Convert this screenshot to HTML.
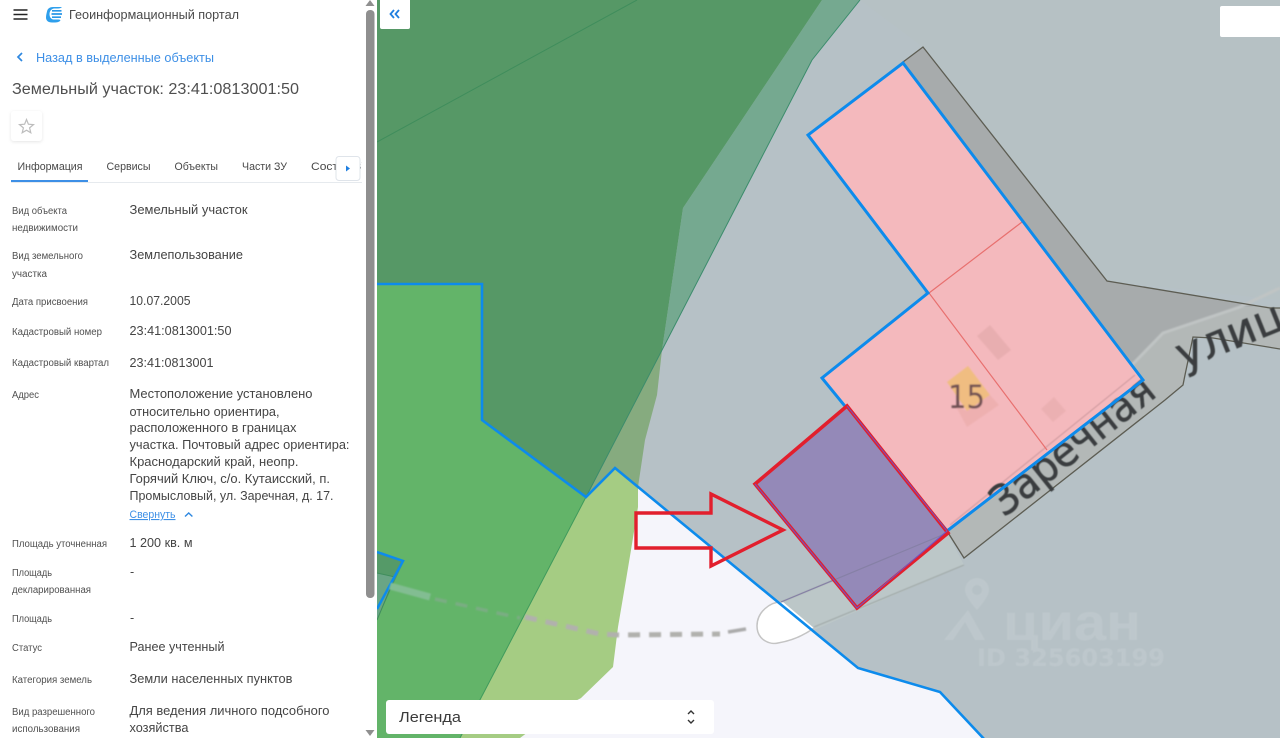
<!DOCTYPE html>
<html lang="ru"><head><meta charset="utf-8"><title>Геоинформационный портал</title>
<style>
html,body{margin:0;padding:0;width:1280px;height:738px;overflow:hidden;background:#fff}
svg{display:block;position:absolute;left:0;top:0}
text{font-family:"Liberation Sans",sans-serif;white-space:pre}
.l{font-size:10px;fill:#505050}
.v{font-size:12.5px;fill:#444}
.t{font-size:11px;fill:#484848}
</style></head><body>
<svg width="1280" height="738" viewBox="0 0 1280 738" xmlns="http://www.w3.org/2000/svg">
<defs>
<filter id="b1" x="-10%" y="-10%" width="120%" height="120%"><feGaussianBlur stdDeviation="0.8"/></filter>
<filter id="b2" x="-5%" y="-5%" width="110%" height="110%"><feGaussianBlur stdDeviation="0.3"/></filter>
<filter id="b3" x="-10%" y="-10%" width="120%" height="120%"><feGaussianBlur stdDeviation="0.5"/></filter>
<filter id="sh" x="-30%" y="-30%" width="160%" height="160%"><feDropShadow dx="0" dy="1" stdDeviation="1.5" flood-color="#000" flood-opacity=".1"/></filter>
<clipPath id="mapc"><rect x="377" y="0" width="903" height="738"/></clipPath>
<clipPath id="tabc"><rect x="0" y="150" width="362" height="30"/></clipPath>
</defs>

<g clip-path="url(#mapc)">
<rect x="377" y="0" width="903" height="738" fill="#b6c1c6"/>
<polygon points="860,0 1280,0 1280,300 1100,280 923,47" fill="#b6c1c4"/>
<!-- white area -->
<polygon points="638,487 858,668 940,692 982,738 500,738 581,698" fill="#f5f5fb"/>
<!-- pale green -->
<polygon points="586,497 615,468 638,487 638,507 631,550 626,580 618,627 613,667 581,698 555,712 520,738 460,738" fill="#a5cc83"/>
<!-- olive -->
<polygon points="662,350 586,497 615,468 638,487 645,440 657,395" fill="#86ab7f"/>
<!-- teal band -->
<polygon points="822,0 860,0 812,60 586,497 662,350 683,208" fill="#75a990"/>
<!-- dark green -->
<polygon points="377,0 822,0 683,208 662,350 586,497 482,420 482,284 377,284" fill="#569866"/>
<polyline points="377,142 637,0" fill="none" stroke="#3f8d5c" stroke-width="1"/>
<polyline points="860,0 812,60 586,497" fill="none" stroke="#3c8c6c" stroke-width="1"/>
<!-- bright green -->
<polygon points="377,284 482,284 482,420 586,497 460,738 377,738" fill="#63b469"/>
<polyline points="586,497 460,738" fill="none" stroke="#3f9a5c" stroke-width="1"/>
<!-- left small polygon -->
<polygon points="377,552 404,561 377,620" fill="#559a68"/>
<polyline points="377,573 395,577 377,620" fill="#6aa585" stroke="#3f8d5c" stroke-width="1"/>
<polyline points="377,552 403,561 377,609" fill="none" stroke="#0d8bec" stroke-width="2.5"/>
<!-- dashed path -->
<g filter="url(#b1)">
<polyline points="390,586 430,597" fill="none" stroke="#82bd92" stroke-width="7"/>
<polyline points="435,599 520,618" fill="none" stroke="#79ad82" stroke-width="3.5" stroke-dasharray="12 9"/>
<polyline points="525,617 600,634 620,635 720,634" fill="none" stroke="#b1b1ad" stroke-width="5" stroke-dasharray="12 9"/>
<polyline points="728,632 746,629" fill="none" stroke="#aaa" stroke-width="3.5"/>
</g>
<!-- street -->
<polygon points="781,602 947,532 964,565 814,630" fill="#bcc7c8" filter="url(#b2)"/>
<path d="M783,602 C770,602 757,612 757,626 C757,640 770,645 778,643 C790,641 803,636 814,628 Z" fill="#fff" filter="url(#b2)"/>
<path d="M781,602 C770,602 757,612 757,626 C757,640 770,645 778,643 C790,641 803,636 814,628" fill="none" stroke="#c4c4c4" stroke-width="1.5" filter="url(#b2)"/>
<g filter="url(#b3)">
<polyline points="781,602 947,533" fill="none" stroke="#a0a9a8" stroke-width="1.2"/>
<polyline points="814,627 964,565" fill="none" stroke="#a0a9a8" stroke-width="1.2"/>
</g>
<!-- road polygon -->
<polygon points="903,62 923,47 1107,281 1270,308 1280,308 1280,349 1213,338 1193,337 1185,375 1183,385 1165,400 964,558 947,531" fill="#a7abac"/>
<polygon points="1130,367 1163,333 1240,307 1265,306 1280,308 1280,349 1213,338 1193,337 1185,375 1183,385 1165,400 964,558 947,531" fill="#b3b8b7"/>
<polyline points="1130,367 1163,333 1240,307 1280,288" fill="none" stroke="#c0c4c4" stroke-width="3" filter="url(#b1)"/>
<polyline points="903,62 923,47 1107,281 1270,308 1280,308" fill="none" stroke="#5d5d53" stroke-width="1.3"/>
<polyline points="947,531 964,558 1165,400 1183,385 1185,375 1193,337 1213,338 1280,349" fill="none" stroke="#5d5d53" stroke-width="1.3"/>
<!-- pink parcel -->
<polygon points="903,63 808,135 928,293 822,378 947,531 1143,380" fill="#f4b9bd"/>
<polyline points="950,525 1135,375" fill="none" stroke="#d39ea3" stroke-width="1.2" filter="url(#b3)"/>
<g filter="url(#b1)">
<polygon points="947,382 968,366 990,395 967,411" fill="#f0bd81"/>
<polygon points="967,411 990,395 999,405 967,427 955,405" fill="#eeb0b0"/>
<polygon points="977,336 990,325 1011,350 998,360" fill="#e8aeb0"/>
<polygon points="1041,409 1054,397 1066,411 1053,422" fill="#ebb0b2"/>
<text x="948" y="408" font-size="32" fill="#6f4f53" style="font-family:'DejaVu Sans',sans-serif" textLength="37" lengthAdjust="spacingAndGlyphs">15</text>
</g>
<polyline points="1022,222 929,293 1047,450" fill="none" stroke="#e8706f" stroke-width="1.2"/>
<!-- road labels -->
<g filter="url(#b3)">
<text transform="translate(1004,518) rotate(-38.5)" font-size="42" fill="#3a3e3f" stroke="#3a3e3f" stroke-width=".5" textLength="197" lengthAdjust="spacingAndGlyphs" style="font-family:'DejaVu Sans',sans-serif">Заречная</text>
<text transform="translate(1183,370) rotate(-22)" font-size="44" fill="#3a3e3f" stroke="#3a3e3f" stroke-width=".5" style="font-family:'DejaVu Sans',sans-serif">улица</text>
</g>
<!-- blue lines -->
<polygon points="903,63 808,135 928,293 822,378 947,531 1143,380" fill="none" stroke="#0d8bec" stroke-width="3"/>
<polyline points="377,284 482,284 482,420 586,497 615,468 858,668 940,692 985,740" fill="none" stroke="#0d8bec" stroke-width="2.6"/>
<!-- purple -->
<polygon points="847,406 755,484 857,608 948,533" fill="#9489b8"/>
<polyline points="781,602 947,533" fill="none" stroke="#8680a6" stroke-width="1.2"/>
<polygon points="847,406 755,484 857,608 948,533" fill="none" stroke="#e21f2d" stroke-width="3.6"/>
<polyline points="847,406 947,531 857,608 755,484" fill="none" stroke="#6f55c6" stroke-width="1"/>
<!-- arrow -->
<polygon points="636,513 711,513 711,494 783,530 711,566 711,548 636,548" fill="none" stroke="#e21f2d" stroke-width="3.4"/>
<!-- watermark -->
<g fill="#fff" opacity=".1" filter="url(#b3)">
<path fill-rule="evenodd" d="M977,578 a12,12 0 0 1 12,12 c0,7 -12,20 -12,20 s-12,-13 -12,-20 a12,12 0 0 1 12,-12 z m0,7 a5,5 0 1 0 0,10 a5,5 0 0 0 0,-10 z"/>
<polygon points="968,610 985,640 975,640 965,622 953,640 944,640"/>
<text x="1003" y="640" font-size="52" font-weight="bold" textLength="138" lengthAdjust="spacingAndGlyphs">циан</text>
<text x="977" y="666" font-size="24" font-weight="bold" textLength="188" style="font-family:'DejaVu Sans',sans-serif">ID 325603199</text>
</g>
</g>

<!-- map controls -->
<rect x="380" y="-3" width="30" height="32" rx="2" fill="#fff"/>
<path d="M394,10 L390.500,14 L394,18 M399,10 L395.500,14 L399,18" fill="none" stroke="#1f7fe0" stroke-width="1.800"/>
<rect x="1220" y="6" width="62" height="31" rx="2" fill="#fff"/>
<rect x="386" y="700" width="328" height="34" rx="3" fill="#fff"/>
<text x="399" y="722" font-size="15" fill="#3a3a3a" textLength="62" lengthAdjust="spacingAndGlyphs" filter="url(#b2)">Легенда</text>
<path d="M688,714 L691,711 L694,714 M688,720 L691,723 L694,720" fill="none" stroke="#333" stroke-width="1.4"/>

<!-- sidebar -->
<rect x="0" y="0" width="377" height="738" fill="#fff"/>
<path d="M13.500,10h14M13.500,14.500h14M13.500,19h14" stroke="#222" stroke-width="1.600" fill="none"/>
<g filter="url(#b2)">
<path d="M53,7 h9 c-1,1 -2,1.500 -4,1.500 h-4 c-3,.5 -4.500,3 -4.500,5.500 c0,2.500 1,4.500 3.500,5.500 h5 c2,0 3,.5 2,1.500 c-1,1 -3,1.500 -5,1.500 h-3 c-4,0 -6,-2 -6,-5 c0,-2 .5,-4 1,-6 c.5,-3 3,-4.500 6,-4.500 z" fill="#2f9fec"/>
<path d="M52,10.800h9.500M51.500,14h10.500M52,17.200h9" stroke="#2a98e8" stroke-width="1.700"/>
<text x="69" y="19" font-size="12.500" fill="#4a4a4a" textLength="170" lengthAdjust="spacingAndGlyphs">Геоинформационный портал</text>

<path d="M22,53 L18,57 L22,61" fill="none" stroke="#2f88e0" stroke-width="1.700"/>
<text x="36" y="62" font-size="13" fill="#3d8fe6" textLength="178" lengthAdjust="spacingAndGlyphs">Назад в выделенные объекты</text>
<text x="12" y="94" font-size="15.500" fill="#505050" textLength="287" lengthAdjust="spacingAndGlyphs">Земельный участок: 23:41:0813001:50</text>
</g>

<rect x="11" y="111" width="31" height="30" rx="3" fill="#fff" filter="url(#sh)"/>
<path d="M26.500,119.500 L28.400,124.200 L33.500,124.600 L29.600,127.900 L30.800,132.800 L26.500,130.200 L22.200,132.800 L23.400,127.900 L19.500,124.600 L24.600,124.200 Z" fill="none" stroke="#bdbdbd" stroke-width="1.200"/>

<g filter="url(#b2)">
<text class="t" x="17.500" y="170" textLength="65" lengthAdjust="spacingAndGlyphs">Информация</text>
<text class="t" x="106.500" y="170" textLength="44" lengthAdjust="spacingAndGlyphs">Сервисы</text>
<text class="t" x="174.500" y="170" textLength="43.500" lengthAdjust="spacingAndGlyphs">Объекты</text>
<text class="t" x="242" y="170" textLength="45" lengthAdjust="spacingAndGlyphs">Части ЗУ</text>
</g>
<g clip-path="url(#tabc)">
<text class="t" x="311" y="170" textLength="58" lengthAdjust="spacingAndGlyphs">Состав ЗУ</text>
</g>
<rect x="11" y="182" width="351" height="1" fill="#e6eaee"/>
<rect x="11" y="180" width="77" height="2" fill="#3d8fe6"/>
<rect x="336" y="156.500" width="24" height="24" rx="3" fill="#fff" stroke="#dfe4ea"/>
<polygon points="346,165.500 350,168.500 346,171.500" fill="#1f7fe0"/>

<g filter="url(#b2)">
<text class="l" x="12" y="214" textLength="55" lengthAdjust="spacingAndGlyphs">Вид объекта</text>
<text class="l" x="12" y="231" textLength="66" lengthAdjust="spacingAndGlyphs">недвижимости</text>
<text class="v" x="129.500" y="214" textLength="118" lengthAdjust="spacingAndGlyphs">Земельный участок</text>

<text class="l" x="12" y="259" textLength="71" lengthAdjust="spacingAndGlyphs">Вид земельного</text>
<text class="l" x="12" y="277" textLength="35" lengthAdjust="spacingAndGlyphs">участка</text>
<text class="v" x="129.500" y="259" textLength="113.500" lengthAdjust="spacingAndGlyphs">Землепользование</text>

<text class="l" x="12" y="305" textLength="76" lengthAdjust="spacingAndGlyphs">Дата присвоения</text>
<text class="v" x="129.500" y="305" textLength="61" lengthAdjust="spacingAndGlyphs">10.07.2005</text>

<text class="l" x="12" y="335" textLength="90" lengthAdjust="spacingAndGlyphs">Кадастровый номер</text>
<text class="v" x="129.500" y="335" textLength="102" lengthAdjust="spacingAndGlyphs">23:41:0813001:50</text>

<text class="l" x="12" y="366" textLength="97" lengthAdjust="spacingAndGlyphs">Кадастровый квартал</text>
<text class="v" x="129.500" y="367" textLength="84" lengthAdjust="spacingAndGlyphs">23:41:0813001</text>

<text class="l" x="12" y="398" textLength="27" lengthAdjust="spacingAndGlyphs">Адрес</text>
<text class="v" x="129.500" y="398" textLength="183" lengthAdjust="spacingAndGlyphs">Местоположение установлено</text>
<text class="v" x="129.500" y="416" textLength="150" lengthAdjust="spacingAndGlyphs">относительно ориентира,</text>
<text class="v" x="129.500" y="432" textLength="167" lengthAdjust="spacingAndGlyphs">расположенного в границах</text>
<text class="v" x="129.500" y="449" textLength="220" lengthAdjust="spacingAndGlyphs">участка. Почтовый адрес ориентира:</text>
<text class="v" x="129.500" y="466" textLength="169" lengthAdjust="spacingAndGlyphs">Краснодарский край, неопр.</text>
<text class="v" x="129.500" y="483" textLength="200.500" lengthAdjust="spacingAndGlyphs">Горячий Ключ, с/о. Кутаисский, п.</text>
<text class="v" x="129.500" y="500" textLength="204" lengthAdjust="spacingAndGlyphs">Промысловый, ул. Заречная, д. 17.</text>
<text x="129.500" y="518" font-size="11" fill="#3d8fe6" text-decoration="underline" textLength="46" lengthAdjust="spacingAndGlyphs">Свернуть</text>
<path d="M185,516.500 L188.700,513 L192.400,516.500" fill="none" stroke="#2f88e0" stroke-width="1.400"/>

<text class="l" x="12" y="547" textLength="95" lengthAdjust="spacingAndGlyphs">Площадь уточненная</text>
<text class="v" x="129.500" y="547" textLength="63" lengthAdjust="spacingAndGlyphs">1 200 кв. м</text>

<text class="l" x="12" y="576" textLength="40" lengthAdjust="spacingAndGlyphs">Площадь</text>
<text class="l" x="12" y="593" textLength="79" lengthAdjust="spacingAndGlyphs">декларированная</text>
<text class="v" x="130" y="576">-</text>

<text class="l" x="12" y="622" textLength="40" lengthAdjust="spacingAndGlyphs">Площадь</text>
<text class="v" x="130" y="622">-</text>

<text class="l" x="12" y="651" textLength="30" lengthAdjust="spacingAndGlyphs">Статус</text>
<text class="v" x="129.500" y="651" textLength="95" lengthAdjust="spacingAndGlyphs">Ранее учтенный</text>

<text class="l" x="12" y="683" textLength="80" lengthAdjust="spacingAndGlyphs">Категория земель</text>
<text class="v" x="129.500" y="683" textLength="163" lengthAdjust="spacingAndGlyphs">Земли населенных пунктов</text>

<text class="l" x="12" y="715" textLength="83" lengthAdjust="spacingAndGlyphs">Вид разрешенного</text>
<text class="l" x="12" y="732" textLength="68" lengthAdjust="spacingAndGlyphs">использования</text>
<text class="v" x="129.500" y="715" textLength="200" lengthAdjust="spacingAndGlyphs">Для ведения личного подсобного</text>
<text class="v" x="129.500" y="732" textLength="59" lengthAdjust="spacingAndGlyphs">хозяйства</text>
</g>

<!-- scrollbar -->
<rect x="365" y="0" width="10" height="738" fill="#fff"/>
<rect x="366" y="10" width="8.500" height="588" rx="4" fill="#8f8f8f"/>
<polygon points="370,0 374.500,6 365.500,6" fill="#8f8f8f"/>
<polygon points="365.500,730 374.500,730 370,736" fill="#8f8f8f"/>
</svg>
</body></html>
